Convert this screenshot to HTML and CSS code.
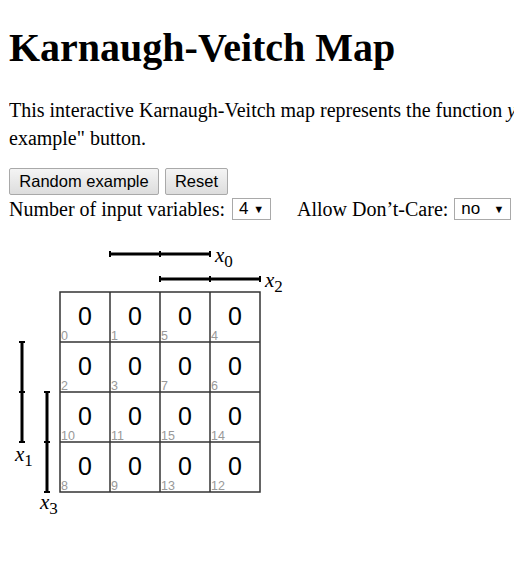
FILE: index.html
```html
<!DOCTYPE html>
<html>
<head>
<meta charset="utf-8">
<title>Karnaugh-Veitch Map</title>
<link rel="stylesheet" href="styles.css">
</head>
<body>
<div class="page">
<h1 class="title">Karnaugh-Veitch Map</h1>
<p class="intro">This interactive Karnaugh-Veitch map represents the function <i>y</i> = <i>f</i>(<i>x</i><sub>3</sub>, <i>x</i><sub>2</sub>, <i>x</i><sub>1</sub>, <i>x</i><sub>0</sub>). Click on the cells to change their values or press the "Random<br>example" button.</p>
<div class="buttons">
<button class="btn btn-random">Random example</button><button class="btn btn-reset">Reset</button>
</div>
<div class="controls">
<span class="lbl">Number of input variables:</span>
<span class="sel sel-num"><span class="sel-val">4</span><span class="arrow">▼</span></span>
<span class="lbl lbl-gap">Allow Don’t-Care:</span>
<span class="sel sel-dc"><span class="sel-val">no</span><span class="arrow">▼</span></span>
</div>
<svg class="kvmap" width="300" height="300" viewBox="0 230 300 300" xmlns="http://www.w3.org/2000/svg">
  <g stroke="#000" stroke-width="3">
    <line x1="110" y1="254" x2="210" y2="254"/>
    <line x1="160" y1="279" x2="260" y2="279"/>
    <line x1="22" y1="342" x2="22" y2="442"/>
    <line x1="47" y1="392" x2="47" y2="492"/>
  </g>
  <g stroke="#000" stroke-width="2">
    <line x1="110" y1="251" x2="110" y2="257"/>
    <line x1="160" y1="251" x2="160" y2="257"/>
    <line x1="210" y1="251" x2="210" y2="257"/>
    <line x1="160" y1="276" x2="160" y2="282"/>
    <line x1="210" y1="276" x2="210" y2="282"/>
    <line x1="260" y1="276" x2="260" y2="282"/>
    <line x1="19" y1="342" x2="25" y2="342"/>
    <line x1="19" y1="392" x2="25" y2="392"/>
    <line x1="19" y1="442" x2="25" y2="442"/>
    <line x1="44" y1="392" x2="50" y2="392"/>
    <line x1="44" y1="442" x2="50" y2="442"/>
    <line x1="44" y1="492" x2="50" y2="492"/>
  </g>
  <g class="varlbl">
    <text x="215" y="262"><tspan class="vx">x</tspan><tspan class="vs" dy="5">0</tspan></text>
    <text x="265" y="287"><tspan class="vx">x</tspan><tspan class="vs" dy="5">2</tspan></text>
    <text x="15" y="461"><tspan class="vx">x</tspan><tspan class="vs" dy="5">1</tspan></text>
    <text x="40" y="509"><tspan class="vx">x</tspan><tspan class="vs" dy="5">3</tspan></text>
  </g>
  <g fill="#fff" stroke="#333" stroke-width="1.5">
    <rect x="60" y="292" width="200" height="200"/>
    <line x1="110" y1="292" x2="110" y2="492"/>
    <line x1="160" y1="292" x2="160" y2="492"/>
    <line x1="210" y1="292" x2="210" y2="492"/>
    <line x1="60" y1="342" x2="260" y2="342"/>
    <line x1="60" y1="392" x2="260" y2="392"/>
    <line x1="60" y1="442" x2="260" y2="442"/>
  </g>
  <g class="val" text-anchor="middle">
    <text x="85" y="325">0</text><text x="135" y="325">0</text><text x="185" y="325">0</text><text x="235" y="325">0</text>
    <text x="85" y="375">0</text><text x="135" y="375">0</text><text x="185" y="375">0</text><text x="235" y="375">0</text>
    <text x="85" y="425">0</text><text x="135" y="425">0</text><text x="185" y="425">0</text><text x="235" y="425">0</text>
    <text x="85" y="475">0</text><text x="135" y="475">0</text><text x="185" y="475">0</text><text x="235" y="475">0</text>
  </g>
  <g class="idx">
    <text x="61" y="339.5">0</text><text x="111" y="339.5">1</text><text x="161" y="339.5">5</text><text x="211" y="339.5">4</text>
    <text x="61" y="389.5">2</text><text x="111" y="389.5">3</text><text x="161" y="389.5">7</text><text x="211" y="389.5">6</text>
    <text x="61" y="439.5">10</text><text x="111" y="439.5">11</text><text x="161" y="439.5">15</text><text x="211" y="439.5">14</text>
    <text x="61" y="489.5">8</text><text x="111" y="489.5">9</text><text x="161" y="489.5">13</text><text x="211" y="489.5">12</text>
  </g>
</svg>
</div>
</body>
</html>
```
FILE: styles.css
```css
html, body {
  overflow: hidden;
}
body {
  margin: 9px;
  font-family: "Liberation Serif", "Times New Roman", serif;
  font-size: 20px;
  color: #000;
  background: #fff;
}
.page {
  width: 1000px;
}
.title {
  font-size: 40px;
  font-weight: bold;
  line-height: 46px;
  margin: 16px 0 25px;
}
.intro {
  margin: 0 0 16px;
  line-height: 28px;
  white-space: nowrap;
}
.intro sub {
  font-size: 70%;
  line-height: 0;
}
.buttons {
  display: flex;
  gap: 6px;
  height: 27px;
}
.btn {
  font-family: "Liberation Sans", Arial, sans-serif;
  font-size: 16.5px;
  color: #000;
  padding: 0;
  white-space: nowrap;
  border: 1px solid #a9a9a9;
  border-radius: 2px;
  background: linear-gradient(#f4f4f4, #dddddd);
  height: 27px;
}
.btn-random {
  width: 150px;
}
.btn-reset {
  width: 63px;
}
.controls {
  display: flex;
  align-items: center;
  height: 26px;
  margin-top: 1px;
}
.lbl {
  margin-right: 7px;
}
.lbl-gap {
  margin-left: 26px;
  margin-right: 6px;
}
.sel {
  display: flex;
  align-items: center;
  justify-content: space-between;
  height: 22px;
  box-sizing: border-box;
  border: 1px solid #a9a9a9;
  background: #fff;
  font-family: "Liberation Sans", Arial, sans-serif;
  font-size: 17px;
  padding: 0 6px 0 6px;
}
.sel-num {
  width: 39px;
}
.sel-dc {
  width: 57px;
}
.arrow {
  font-size: 11px;
}
.kvmap {
  display: block;
  margin: 8px 0 0 -9px;
}
.varlbl {
  font-family: "Liberation Serif", "Times New Roman", serif;
  font-size: 21px;
}
.vx {
  font-style: italic;
}
.vs {
  font-size: 17px;
}
.val {
  font-family: "Liberation Sans", Arial, sans-serif;
  font-size: 25px;
  fill: #000;
}
.idx {
  font-family: "Liberation Sans", Arial, sans-serif;
  font-size: 12.5px;
  fill: #999;
}
```
